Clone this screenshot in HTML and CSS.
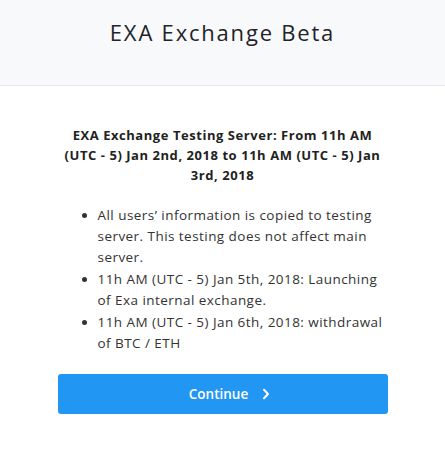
FILE: index.html
```html
<!DOCTYPE html>
<html>
<head>
<meta charset="utf-8">
<link rel="stylesheet" href="styles.css">
</head>
<body>
<div class="modal">
  <div class="modal-header">
    <h1 class="modal-title">EXA Exchange Beta</h1>
  </div>
  <div class="modal-body">
    <h2 class="notice-title">EXA Exchange Testing Server: From 11h AM (UTC - 5) Jan 2nd, 2018 to 11h AM (UTC - 5) Jan 3rd, 2018</h2>
    <ul class="notice-list">
      <li>All users’ information is copied to testing server. This testing does not affect main server.</li>
      <li>11h AM (UTC - 5) Jan 5th, 2018: Launching of Exa internal exchange.</li>
      <li>11h AM (UTC - 5) Jan 6th, 2018: withdrawal of BTC / ETH</li>
    </ul>
    <button class="btn-continue">Continue
      <svg class="chev" width="8" height="12" viewBox="0 0 8 12"><path d="M2 1.8 L6 6 L2 10.2" fill="none" stroke="#fff" stroke-width="2" stroke-linecap="round" stroke-linejoin="round"/></svg>
    </button>
  </div>
</div>
</body>
</html>
```
FILE: styles.css
```css
html, body {
  margin: 0;
  padding: 0;
  background: #fff;
}
body {
  font-family: "Open Sans", "Noto Sans", sans-serif;
  color: #212529;
  width: 445px;
  height: 454px;
  overflow: hidden;
}
.modal-header {
  height: 86px;
  background: #f8f9fa;
  border-bottom: 1px solid #e6e8eb;
  display: flex;
  justify-content: center;
  box-sizing: border-box;
  padding-top: 14px;
}
.modal-title {
  margin: 0;
  font-size: 22px;
  font-weight: 400;
  line-height: 36px;
  color: #1f2328;
  letter-spacing: 1.8px;
}
.modal-body {
  width: 330px;
  margin: 0 auto;
  padding-top: 39px;
}
.notice-title {
  margin: 0;
  text-align: center;
  font-size: 13px;
  font-weight: 700;
  line-height: 20px;
  color: #222;
  letter-spacing: 0.55px;
}
.notice-list {
  margin: 20px 0 0 0;
  padding-left: 40px;
  font-size: 13.5px;
  line-height: 21px;
  color: #333;
  letter-spacing: 0.45px;
}
.notice-list li {
  margin-bottom: 1px;
}
.btn-continue {
  display: flex;
  align-items: center;
  justify-content: center;
  gap: 14px;
  width: 330px;
  height: 40px;
  margin-top: 20px;
  border: none;
  border-radius: 3px;
  background: #2196f3;
  color: #fff;
  font-family: "Open Sans", "Noto Sans", sans-serif;
  font-size: 13.5px;
  font-weight: 600;
  padding: 0 0 0 14px;
}
.chev {
  display: block;
}
```
